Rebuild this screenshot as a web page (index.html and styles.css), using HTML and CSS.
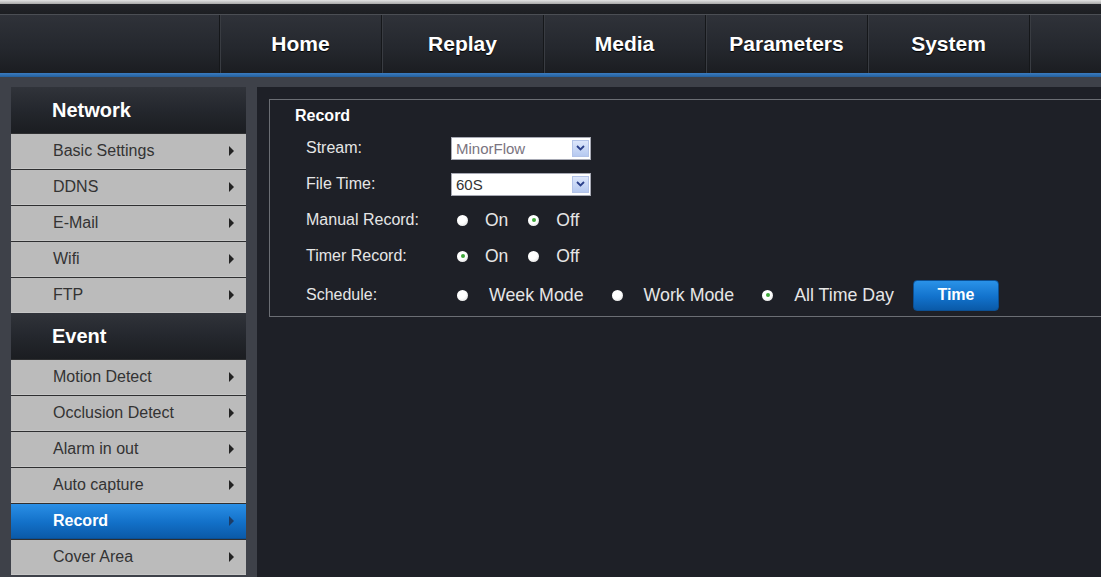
FILE: index.html
```html
<!DOCTYPE html>
<html>
<head>
<meta charset="utf-8">
<title>Record</title>
<link rel="stylesheet" href="styles.css">
</head>
<body>
<div class="topstrip"></div>
<nav class="navbar">
  <div class="nav-blank"></div>
  <a class="nav-item">Home</a>
  <a class="nav-item">Replay</a>
  <a class="nav-item">Media</a>
  <a class="nav-item">Parameters</a>
  <a class="nav-item">System</a>
  <div class="nav-rest"></div>
</nav>
<div class="navline"></div>
<div class="main">
  <aside class="sidebar">
    <div class="side-head">Network</div>
    <div class="side-item">Basic Settings<span class="arrow"></span></div>
    <div class="side-item">DDNS<span class="arrow"></span></div>
    <div class="side-item">E-Mail<span class="arrow"></span></div>
    <div class="side-item">Wifi<span class="arrow"></span></div>
    <div class="side-item">FTP<span class="arrow"></span></div>
    <div class="side-head">Event</div>
    <div class="side-item">Motion Detect<span class="arrow"></span></div>
    <div class="side-item">Occlusion Detect<span class="arrow"></span></div>
    <div class="side-item">Alarm in out<span class="arrow"></span></div>
    <div class="side-item">Auto capture<span class="arrow"></span></div>
    <div class="side-item active">Record<span class="arrow"></span></div>
    <div class="side-item">Cover Area<span class="arrow"></span></div>
  </aside>
  <section class="content">
    <div class="panel">
      <div class="legend">Record</div>
      <div class="row">
        <span class="label">Stream:</span>
        <div class="select"><span class="sel-text muted">MinorFlow</span><span class="sel-btn"><svg width="9" height="6" viewBox="0 0 9 6"><path d="M1 1 L4.5 4.5 L8 1" fill="none" stroke="#2a3f8a" stroke-width="1.8"/></svg></span></div>
      </div>
      <div class="row">
        <span class="label">File Time:</span>
        <div class="select"><span class="sel-text">60S</span><span class="sel-btn"><svg width="9" height="6" viewBox="0 0 9 6"><path d="M1 1 L4.5 4.5 L8 1" fill="none" stroke="#2a3f8a" stroke-width="1.8"/></svg></span></div>
      </div>
      <div class="row">
        <span class="label">Manual Record:</span>
        <span class="radio"></span><span class="opt">On</span>
        <span class="radio checked"></span><span class="opt">Off</span>
      </div>
      <div class="row">
        <span class="label">Timer Record:</span>
        <span class="radio checked"></span><span class="opt">On</span>
        <span class="radio"></span><span class="opt">Off</span>
      </div>
      <div class="row schedule">
        <span class="label">Schedule:</span>
        <span class="radio"></span><span class="opt wide">Week Mode</span>
        <span class="radio"></span><span class="opt wide">Work Mode</span>
        <span class="radio checked"></span><span class="opt wide">All Time Day</span>
        <button class="btn">Time</button>
      </div>
    </div>
  </section>
</div>
</body>
</html>
```
FILE: styles.css
```css
html, body {
  margin: 0;
  padding: 0;
  height: 100%;
  overflow: hidden;
}

body {
  background: #3e4149;
  font-family: "Liberation Sans", Arial, sans-serif;
  font-size: 14px;
}

/* thin strip above the navigation */
.topstrip {
  height: 14px;
  background: linear-gradient(#e4e4e4 0, #a8a8a8 4px, #24262b 4px, #1c1e22 14px);
  border-bottom: 1px solid #4b4e54;
}

.navbar {
  display: flex;
  height: 58px;
  background: linear-gradient(#2f3239, #24272d 60%, #1b1d21);
}

.nav-blank {
  width: 219px;
  flex: none;
}

.nav-item {
  width: 161px;
  flex: none;
  display: flex;
  align-items: center;
  justify-content: center;
  color: #fff;
  font-weight: bold;
  font-size: 21px;
  border-left: 1px solid #15171a;
  box-shadow: inset 1px 0 0 #393c42;
  text-shadow: 0 1px 1px #000;
  cursor: pointer;
}

.nav-rest {
  flex: 1;
  border-left: 1px solid #15171a;
  box-shadow: inset 1px 0 0 #393c42;
}

.navline {
  height: 4px;
  background: linear-gradient(#3b7cc0, #24609d);
}

.main {
  display: flex;
  gap: 11px;
  padding: 10px 0 0 11px;
}

/* left menu */
.sidebar {
  width: 235px;
  flex: none;
}

.side-head {
  height: 46px;
  box-sizing: border-box;
  padding-left: 41px;
  display: flex;
  align-items: center;
  color: #fff;
  font-weight: bold;
  font-size: 20px;
  background: linear-gradient(#30333a, #23262c 55%, #1b1d21);
}

.side-item {
  height: 36px;
  box-sizing: border-box;
  display: flex;
  align-items: center;
  padding-left: 42px;
  background: #bbbbbb;
  color: #333;
  font-size: 16px;
  border-top: 1px solid #2e2f31;
  border-bottom: 1px solid #c6c6c6;
  position: relative;
}

.arrow {
  position: absolute;
  right: 12px;
  top: 50%;
  margin-top: -5px;
  width: 0;
  height: 0;
  border-top: 5px solid transparent;
  border-bottom: 5px solid transparent;
  border-left: 5px solid #222;
}

.side-item.active {
  background: linear-gradient(#2a8fe6, #1270c8 55%, #0b5aa8);
  color: #fff;
  font-weight: bold;
  border-bottom-color: #0a4f95;
}

.side-item.active .arrow {
  border-left-color: #1d3c66;
}

/* right content */
.content {
  flex: 1;
  background: #1e2027;
  height: 490px;
  padding: 12px 0 0 12px;
}

.panel {
  border: 1px solid #6b6e74;
  border-right: none;
  height: 218px;
  padding: 6px 0 0 0;
  box-sizing: border-box;
  color: #e6e6e6;
}

.legend {
  height: 20px;
  line-height: 20px;
  padding-left: 25px;
  font-weight: bold;
  font-size: 16px;
  color: #fff;
  margin-bottom: 4px;
}

.row {
  height: 36px;
  display: flex;
  align-items: center;
  padding-left: 36px;
  font-size: 16px;
}

.row.schedule {
  height: 42px;
}

.label {
  width: 145px;
  flex: none;
}

.select {
  width: 140px;
  height: 23px;
  box-sizing: border-box;
  background: #fff;
  border: 1px solid #a7a9b4;
  display: flex;
  align-items: center;
  justify-content: space-between;
  font-size: 15px;
  color: #333;
}

.sel-text {
  padding-left: 4px;
}

.sel-text.muted {
  color: #7a7480;
}

.sel-btn {
  width: 17px;
  height: 17px;
  margin-right: 1px;
  display: flex;
  align-items: center;
  justify-content: center;
  background: linear-gradient(#dce6fb, #b6c9f0);
  border: 1px solid #b3c3e8;
  box-sizing: border-box;
}

.radio {
  width: 11px;
  height: 11px;
  border-radius: 50%;
  background: radial-gradient(circle at 40% 35%, #ffffff 45%, #d4d4d4 100%);
  margin-left: 6px;
  flex: none;
  position: relative;
}

.opt + .radio {
  margin-left: 0;
}

.radio.checked::after {
  content: "";
  position: absolute;
  left: 3.5px;
  top: 3.5px;
  width: 4px;
  height: 4px;
  border-radius: 50%;
  background: #3fa83a;
}

.opt {
  font-size: 17.5px;
  margin-left: 17px;
  margin-right: 20px;
}

.opt.wide {
  font-size: 17.8px;
  margin-left: 21px;
  margin-right: 28px;
}

.btn {
  margin-left: -9px;
  width: 86px;
  height: 31px;
  border: 1px solid #0c4f92;
  border-radius: 4px;
  background: linear-gradient(#2a92e8, #1272cc 55%, #0a5aa8);
  color: #fff;
  font-family: "Liberation Sans", Arial, sans-serif;
  font-weight: bold;
  font-size: 16px;
  padding: 0;
}
```
